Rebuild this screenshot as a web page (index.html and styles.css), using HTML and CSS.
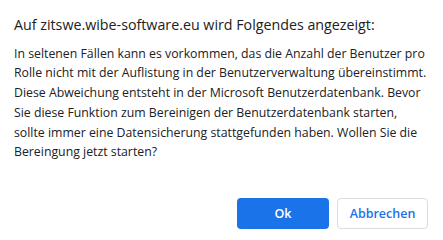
FILE: index.html
```html
<!DOCTYPE html>
<html lang="de">
<head>
    <meta charset="UTF-8">
    <title>Hinweis</title>
    <link rel="stylesheet" href="styles.css">
</head>
<body>
    <div class="dialog">
        <h1 class="dialog-title">Auf zitswe.wibe-software.eu wird Folgendes angezeigt:</h1>
        <p class="dialog-message">In seltenen Fällen kann es vorkommen, das die Anzahl der Benutzer pro Rolle nicht mit der Auflistung in der Benutzerverwaltung übereinstimmt. Diese Abweichung entsteht in der Microsoft Benutzerdatenbank. Bevor Sie diese Funktion zum Bereinigen der Benutzerdatenbank starten, sollte immer eine Datensicherung stattgefunden haben. Wollen Sie die Bereingung jetzt starten?</p>
        <div class="dialog-buttons">
            <button class="btn btn-primary">Ok</button>
            <button class="btn btn-secondary">Abbrechen</button>
        </div>
    </div>
</body>
</html>
```

FILE: styles.css
```css
body {
    margin: 0;
    background-color: #ffffff;
    font-family: 'Open Sans', 'Noto Sans', sans-serif;
    color: #202124;
}
.dialog {
    width: 443px;
    height: 240px;
    box-sizing: border-box;
    padding: 15px 15px 11px 14px;
    display: flex;
    flex-direction: column;
}
.dialog-title {
    margin: 0;
    font-size: 14.25px;
    font-weight: 400;
    line-height: 20px;
}
.dialog-message {
    margin: 8.5px 0 0;
    padding-right: 1px;
    font-size: 12.3px;
    line-height: 19.8px;
    color: #202124;
}
.dialog-buttons {
    margin-top: auto;
    display: flex;
    justify-content: flex-end;
    gap: 8px;
}
.btn {
    height: 31px;
    border-radius: 4px;
    font-family: inherit;
    font-size: 12.5px;
    font-weight: 600;
    cursor: pointer;
}
.btn-primary {
    width: 92px;
    background-color: #1a73e8;
    border: none;
    color: #ffffff;
}
.btn-secondary {
    width: 91px;
    background-color: #ffffff;
    border: 1px solid #dadce0;
    color: #1a73e8;
}
```
